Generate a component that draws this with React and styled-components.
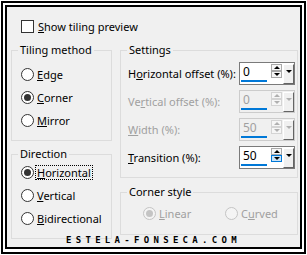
import React from 'react';
import styled, { createGlobalStyle, css } from 'styled-components';

const Global = createGlobalStyle`
  html, body { margin: 0; padding: 0; background: #fff; }
  body { font-family: "Noto Sans", "Open Sans", sans-serif; font-size: 11px; color: #000; }
  * { box-sizing: border-box; }
`;

const Outer = styled.div`
  margin: 1px;
  width: 305px;
  height: 253px;
  border: 2px solid #000;
  padding: 2px 2px 3px 2px;
  background: #fff;
`;

const Panel = styled.div`
  position: relative;
  width: 100%;
  height: 100%;
  border: 2px solid #000;
  background: #f0f0f0;
  padding: 11px 0 0 4px;
`;

const CheckRow = styled.label`
  display: flex;
  align-items: center;
  gap: 4px;
  height: 16px;
  margin-left: 10px;
`;

const CheckBox = styled.span`
  width: 13px;
  height: 13px;
  border: 1px solid #333;
  background: #fff;
`;

const Acc = styled.u`
  text-decoration: underline;
  text-underline-offset: 1px;
`;

const Columns = styled.div`
  display: flex;
  gap: 8px;
  margin-top: 16px;
`;

const Column = styled.div`
  display: flex;
  flex-direction: column;
  width: ${p => p.$w}px;
  gap: ${p => p.$gap}px;
`;

const Group = styled.div`
  border: 1px solid #dcdcdc;
  padding-bottom: ${p => p.$pb}px;
`;

const GroupTitle = styled.div`
  margin: -9px 0 0 6px;
  padding: 0 2px;
  width: fit-content;
  line-height: 16px;
  background: #f0f0f0;
`;

const RadioList = styled.div`
  display: flex;
  flex-direction: column;
  padding-left: ${p => p.$pl}px;
  margin-top: ${p => p.$mt}px;
`;

const RadioGrid = styled.div`
  display: grid;
  grid-template-columns: 82px auto;
  padding-left: 22px;
  margin-top: ${p => p.$mt}px;
`;

const RadioRow = styled.label`
  display: flex;
  align-items: center;
  gap: 3px;
  height: 23px;
  color: ${p => (p.$disabled ? '#a0a0a0' : '#000')};
`;

const RadioCircle = styled.span`
  display: flex;
  align-items: center;
  justify-content: center;
  width: 13px;
  height: 13px;
  border-radius: 50%;
  border: 1px solid ${p => (p.$disabled ? '#c4c4c4' : '#333')};
  background: ${p => (p.$disabled ? '#f4f4f4' : '#fff')};
  &::after {
    content: '';
    display: ${p => (p.$checked ? 'block' : 'none')};
    width: 7px;
    height: 7px;
    border-radius: 50%;
    background: ${p => (p.$disabled ? '#c4c4c4' : '#333')};
  }
`;

const FocusText = styled.span`
  display: inline-block;
  line-height: 13px;
  padding: 0 1px;
  margin-left: -1px;
  outline: 1px dotted #000;
`;

const SettingsList = styled.div`
  display: flex;
  flex-direction: column;
  gap: 5px;
  margin-top: 4px;
  padding: 0 2px 0 7px;
`;

const SettingRow = styled.div`
  display: flex;
  align-items: center;
  justify-content: space-between;
  height: 23px;
  color: ${p => (p.$disabled ? '#a0a0a0' : '#000')};
`;

const SpinBox = styled.div`
  display: flex;
  align-items: flex-start;
  width: 56px;
  height: 23px;
  border: 1px solid ${p => (p.$disabled ? '#cccccc' : '#7a7a7a')};
  background: ${p => (p.$disabled ? '#f0f0f0' : '#fff')};
`;

const Value = styled.div`
  margin-left: 1px;
  width: 26px;
  height: 19px;
  padding: 1px 0 0 2px;
  line-height: 16px;
  font-size: 12px;
  border-bottom: 2px solid #0078d7;
  color: ${p => (p.$disabled ? '#a0a0a0' : '#000')};
`;

const Spinner = styled.div`
  display: flex;
  flex-direction: column;
  margin: 1px 0 0 4px;
  width: 11px;
`;

const triangle = css`
  content: '';
  width: 0;
  height: 0;
  border-left: 3px solid transparent;
  border-right: 3px solid transparent;
`;

const SpinButton = styled.span`
  display: flex;
  align-items: center;
  justify-content: center;
  height: 7px;
  border: 1px solid ${p => (p.$hover ? '#0078d7' : p.$disabled ? '#d4d4d4' : '#a8a8a8')};
  background: ${p => (p.$hover ? '#cce4f7' : '#f6f6f6')};
  &::after {
    ${triangle};
    ${p =>
      p.$up
        ? css`border-bottom: 3px solid ${p.$disabled ? '#b0b0b0' : '#000'};`
        : css`border-top: 3px solid ${p.$disabled ? '#b0b0b0' : '#000'};`}
  }
`;

const DropButton = styled.span`
  display: flex;
  justify-content: center;
  margin: 1px 0 0 1px;
  width: 11px;
  height: 20px;
  padding-top: 5px;
  border: 1px solid;
  border-color: #fff #646464 #646464 #fff;
  background: #f0f0f0;
  &::after {
    ${triangle};
    border-top: 3px solid ${p => (p.$disabled ? '#b0b0b0' : '#000')};
  }
`;

const Watermark = styled.div`
  position: absolute;
  left: 59px;
  top: 229px;
  font-family: "DejaVu Sans Mono", monospace;
  font-weight: bold;
  font-size: 9px;
  line-height: 9px;
  letter-spacing: 4.3px;
  color: #000;
  white-space: nowrap;
`;

function Radio({ checked, disabled, children }) {
  return (
    <RadioRow $disabled={disabled}>
      <RadioCircle $checked={checked} $disabled={disabled} />
      {children}
    </RadioRow>
  );
}

function Spin({ value, disabled, hoverDown }) {
  return (
    <SpinBox $disabled={disabled}>
      <Value $disabled={disabled}>{value}</Value>
      <Spinner>
        <SpinButton $up $disabled={disabled} />
        <SpinButton $disabled={disabled} $hover={hoverDown} />
      </Spinner>
      <DropButton $disabled={disabled} />
    </SpinBox>
  );
}

export default function App() {
  return (
    <>
      <Global />
      <Outer>
        <Panel>
          <CheckRow>
            <CheckBox />
            <span><Acc>S</Acc>how tiling preview</span>
          </CheckRow>
          <Columns>
            <Column $w={101} $gap={13}>
              <Group $pb={8}>
                <GroupTitle>Tiling method</GroupTitle>
                <RadioList $pl={9} $mt={5}>
                  <Radio><span><Acc>E</Acc>dge</span></Radio>
                  <Radio checked><span><Acc>C</Acc>orner</span></Radio>
                  <Radio><span><Acc>M</Acc>irror</span></Radio>
                </RadioList>
              </Group>
              <Group $pb={8}>
                <GroupTitle>Direction</GroupTitle>
                <RadioList $pl={9} $mt={-1}>
                  <Radio checked><FocusText><Acc>H</Acc>orizontal</FocusText></Radio>
                  <Radio><span><Acc>V</Acc>ertical</span></Radio>
                  <Radio><span><Acc>B</Acc>idirectional</span></Radio>
                </RadioList>
              </Group>
            </Column>
            <Column $w={178} $gap={14}>
              <Group $pb={8}>
                <GroupTitle>Settings</GroupTitle>
                <SettingsList>
                  <SettingRow>
                    <span>H<Acc>o</Acc>rizontal offset (%):</span>
                    <Spin value="0" />
                  </SettingRow>
                  <SettingRow $disabled>
                    <span>Ve<Acc>r</Acc>tical offset (%):</span>
                    <Spin value="0" disabled />
                  </SettingRow>
                  <SettingRow $disabled>
                    <span><Acc>W</Acc>idth (%):</span>
                    <Spin value="50" disabled />
                  </SettingRow>
                  <SettingRow>
                    <span><Acc>T</Acc>ransition (%):</span>
                    <Spin value="50" hoverDown />
                  </SettingRow>
                </SettingsList>
              </Group>
              <Group $pb={9}>
                <GroupTitle>Corner style</GroupTitle>
                <RadioGrid $mt={2}>
                  <Radio checked disabled><span><Acc>L</Acc>inear</span></Radio>
                  <Radio disabled><span>C<Acc>u</Acc>rved</span></Radio>
                </RadioGrid>
              </Group>
            </Column>
          </Columns>
          <Watermark>ESTELA-FONSECA.COM</Watermark>
        </Panel>
      </Outer>
    </>
  );
}
